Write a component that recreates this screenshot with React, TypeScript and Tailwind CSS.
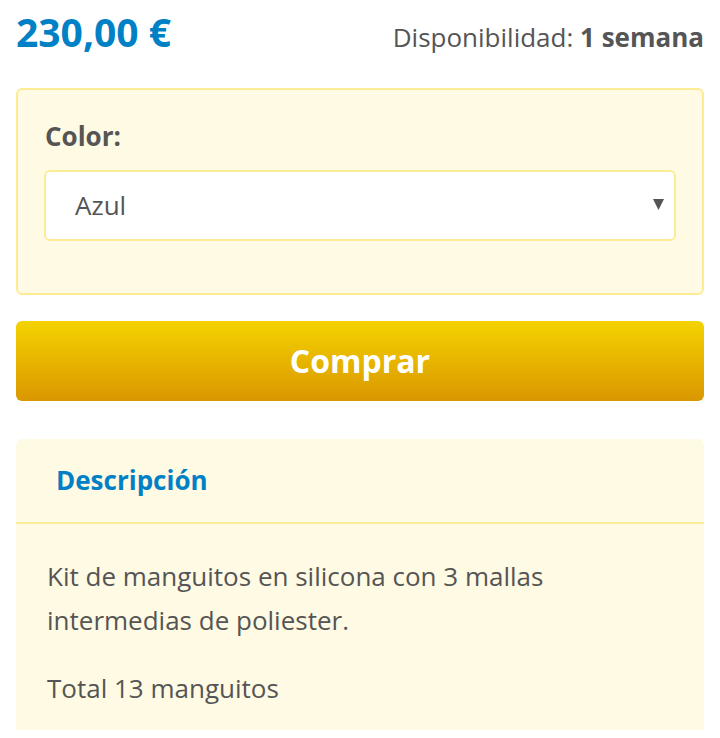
import { useState } from 'react';

export default function App() {
  const [color, setColor] = useState('Azul');

  return (
    <div className="min-h-screen bg-white font-['Open_Sans','Liberation_Sans',sans-serif] text-[#555555] px-4">
      {/* precio + disponibilidad */}
      <div className="flex items-baseline justify-between pt-[5px] h-[88px]">
        <span className="text-[39px] font-bold text-[#0081c6] leading-[54px]">230,00 €</span>
        <span className="text-[26px] leading-[54px]">
          Disponibilidad: <strong className="font-bold">1 semana</strong>
        </span>
      </div>

      {/* opciones */}
      <div className="bg-[#fffae3] border-2 border-[#fdec95] rounded-md pl-[26px] pr-[26px] pt-[26px] pb-[52px]">
        <label className="block text-[26px] font-bold leading-[40px] mb-[14px] pl-[1px]">Color:</label>
        <div className="relative">
          <select
            value={color}
            onChange={(e) => setColor(e.target.value)}
            className="w-full h-[71px] appearance-none bg-white border-2 border-[#fdec95] rounded-md pl-[29px] text-[26px] text-[#555555] outline-none"
          >
            <option>Azul</option>
            <option>Rojo</option>
            <option>Negro</option>
          </select>
          <svg className="absolute right-[12px] top-[29px] w-[11px] h-[11px] pointer-events-none" viewBox="0 0 11 11">
            <path d="M0 0 H11 L5.5 11 Z" fill="#555555" />
          </svg>
        </div>
      </div>

      {/* comprar */}
      <button className="mt-[26px] w-full h-[80px] rounded-md bg-gradient-to-b from-[#f4d300] to-[#d99700] text-white text-[32px] font-bold">
        Comprar
      </button>

      {/* descripción */}
      <div className="mt-[38px] bg-[#fffae3] rounded-t-md">
        <div className="h-[85px] flex items-center pl-[40px] border-b-2 border-[#fdec95]">
          <h3 className="text-[26px] font-bold text-[#0081c6]">Descripción</h3>
        </div>
        <div className="pl-[31px] pr-[60px] pt-[30px] pb-[20px] text-[26px] leading-[44px]">
          <p className="mb-[24px]">Kit de manguitos en silicona con 3 mallas intermedias de poliester.</p>
          <p>Total 13 manguitos</p>
        </div>
      </div>
    </div>
  );
}
